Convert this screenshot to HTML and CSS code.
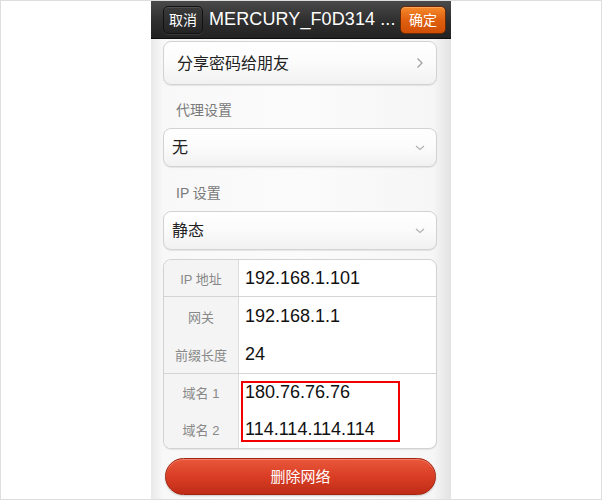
FILE: index.html
```html
<!DOCTYPE html>
<html lang="zh-CN">
<head>
    <meta charset="UTF-8">
    <meta name="viewport" content="width=device-width, initial-scale=1.0">
    <title>网络设置</title>
    <link rel="stylesheet" href="styles.css">
</head>
<body>

<div class="frame">
    <div class="phone">
        <header class="topbar">
            <button class="btn-cancel">取消</button>
            <h1 class="title">MERCURY_F0D314 ...</h1>
            <button class="btn-ok">确定</button>
        </header>

        <div class="content">
            <div class="card share">
                <span>分享密码给朋友</span>
                <svg class="chev" width="8" height="12" viewBox="0 0 8 12"><polyline points="1.5,1.5 6,6 1.5,10.5" fill="none" stroke="#a0a0a0" stroke-width="1.3"/></svg>
            </div>

            <div class="label">代理设置</div>
            <div class="card select">
                <span>无</span>
                <svg class="chev" width="10" height="6" viewBox="0 0 10 6"><polyline points="1,1 5,4.5 9,1" fill="none" stroke="#b0b0b0" stroke-width="1.2"/></svg>
            </div>

            <div class="label">IP 设置</div>
            <div class="card select">
                <span>静态</span>
                <svg class="chev" width="10" height="6" viewBox="0 0 10 6"><polyline points="1,1 5,4.5 9,1" fill="none" stroke="#b0b0b0" stroke-width="1.2"/></svg>
            </div>

            <div class="card info">
                <div class="group">
                    <div class="keys">
                        <div class="row g1">IP 地址</div>
                    </div>
                    <div class="vals">
                        <div class="row g1">192.168.1.101</div>
                    </div>
                </div>
                <div class="group">
                    <div class="keys">
                        <div class="row g2">网关</div>
                        <div class="row g2">前缀长度</div>
                    </div>
                    <div class="vals">
                        <div class="row g2">192.168.1.1</div>
                        <div class="row g2">24</div>
                    </div>
                </div>
                <div class="group last">
                    <div class="keys">
                        <div class="row g3">域名 1</div>
                        <div class="row g3">域名 2</div>
                    </div>
                    <div class="vals">
                        <div class="row g3">180.76.76.76</div>
                        <div class="row g3">114.114.114.114</div>
                        <div class="mark"></div>
                    </div>
                </div>
            </div>

            <button class="btn-delete">删除网络</button>
        </div>
    </div>
</div>

</body>
</html>
```

FILE: styles.css
```css
body {
    margin: 0;
    font-family: "Noto Sans CJK SC", "Liberation Sans", sans-serif;
    background: #fff;
}

.frame {
    width: 602px;
    height: 500px;
    box-sizing: border-box;
    border: 1px solid #dedede;
    background: #fff;
    overflow: hidden;
}

.phone {
    width: 300px;
    height: 100%;
    margin-left: 150px;
    display: flex;
    flex-direction: column;
    background: linear-gradient(to right, #e9e9e9 0, #f8f8f8 4%, #fbfbfb 50%, #f6f6f6 94%, #e3e3e3 100%);
}

/* top bar */
.topbar {
    height: 37px;
    flex-shrink: 0;
    display: flex;
    align-items: center;
    padding: 0 5px 0 12px;
    background: linear-gradient(#4a4a4a, #2e2e2e 55%, #222);
    border-bottom: 1px solid #0e0e0e;
}

.btn-cancel,
.btn-ok {
    height: 28px;
    padding: 0 0 2px;
    border-radius: 5px;
    font-family: "Noto Sans CJK SC", sans-serif;
    font-size: 14px;
    color: #fff;
}

.btn-cancel {
    width: 40px;
    background: linear-gradient(#3a3a3a, #242424);
    border: 1px solid #121212;
    box-shadow: inset 0 1px 0 rgba(255, 255, 255, 0.12), 0 1px 0 rgba(255, 255, 255, 0.1);
}

.btn-ok {
    width: 46px;
    background: linear-gradient(#f58a2c, #e0600f 50%, #d04f06);
    border: 1px solid #6a2a05;
    box-shadow: inset 0 1px 0 rgba(255, 255, 255, 0.25);
}

.title {
    flex: 1;
    margin: 0 0 0 6px;
    font-family: "Liberation Sans", sans-serif;
    font-size: 18px;
    font-weight: normal;
    color: #fff;
    white-space: nowrap;
    overflow: hidden;
    letter-spacing: 0.1px;
}

/* content */
.content {
    flex: 1;
    display: flex;
    flex-direction: column;
    padding: 2px 14px 0 12px;
}

.card {
    background: linear-gradient(#fff, #fbfbfb 50%, #f1f1f1);
    border: 1px solid #d2d2d2;
    border-radius: 8px;
    box-shadow: 0 1px 1px rgba(0, 0, 0, 0.08);
}

.card span {
    padding-bottom: 3px;
}

.share {
    height: 42px;
    display: flex;
    align-items: center;
    justify-content: space-between;
    padding: 0 12px 0 13px;
    font-size: 16px;
    color: #222;
}

.label {
    padding: 16px 0 0 13px;
    height: 27px;
    line-height: 18px;
    font-size: 14px;
    color: #7a7a7a;
    font-family: "Liberation Sans", "Noto Sans CJK SC", sans-serif;
}

.select {
    height: 37px;
    display: flex;
    align-items: center;
    justify-content: space-between;
    padding: 0 11px 0 8px;
    font-size: 16px;
    color: #222;
}

.select + .label {
    padding-top: 17px;
}

.chev {
    display: block;
}

/* info table */
.info {
    margin-top: 9px;
    overflow: hidden;
    background: #fff;
}

.group {
    display: flex;
    border-bottom: 1px solid #d4d4d4;
}

.group.last {
    border-bottom: none;
}

.keys {
    width: 74px;
    background: #f4f4f4;
    border-right: 1px solid #dcdcdc;
}

.keys .row {
    justify-content: center;
    font-size: 13px;
    color: #888;
    font-family: "Liberation Sans", "Noto Sans CJK SC", sans-serif;
}

.vals {
    flex: 1;
    position: relative;
}

.vals .row {
    padding-left: 6px;
    font-family: "Liberation Sans", sans-serif;
    font-size: 18px;
    color: #111;
}

.row {
    display: flex;
    align-items: center;
}

.row.g1 { height: 36px; }
.row.g2 { height: 38px; }
.row.g3 { height: 37px; }

.mark {
    position: absolute;
    top: 7px;
    left: 2px;
    width: 159px;
    height: 61px;
    box-sizing: border-box;
    border: 2px solid #f20000;
}

/* delete button */
.btn-delete {
    margin: 9px 1px 0 2px;
    height: 37px;
    padding: 0 0 2px;
    border-radius: 19px;
    border: 1px solid #a3240f;
    background: linear-gradient(#e9573b, #d93e25 50%, #c02c17);
    box-shadow: inset 0 1px 0 rgba(255, 255, 255, 0.25), 0 1px 2px rgba(0, 0, 0, 0.2);
    color: #fff;
    font-family: "Noto Sans CJK SC", sans-serif;
    font-size: 15px;
}
```
